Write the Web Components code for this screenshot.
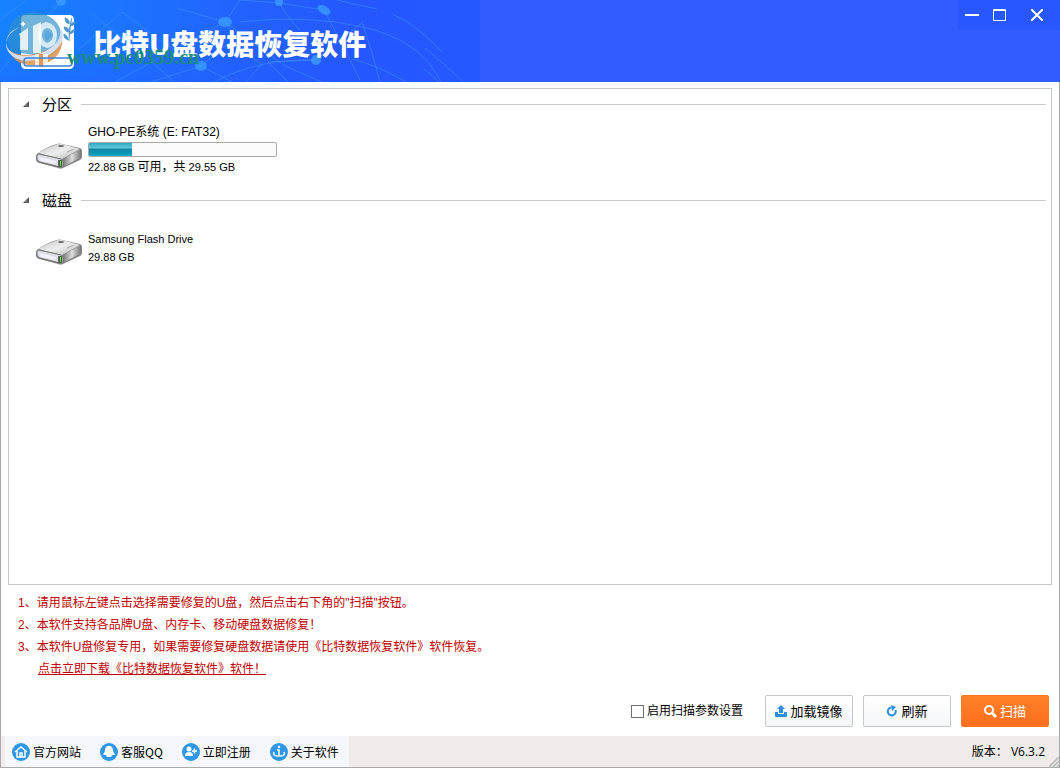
<!DOCTYPE html>
<html lang="zh-CN">
<head>
<meta charset="utf-8">
<meta name="viewport" content="width=device-width, initial-scale=1">
<title>比特U盘数据恢复软件</title>
<style>
html,body{margin:0}
body{font:12px/16px "Liberation Sans","Noto Sans CJK SC",sans-serif;color:#000;background:#fff}
</style>
</head>
<body>
<recovery-app></recovery-app>
<script>
const define = (name, html, setup) => customElements.define(name, class extends HTMLElement {
  constructor() {
    super();
    const t = document.createElement('template');
    t.innerHTML = html;
    this.attachShadow({mode: 'open'}).append(t.content.cloneNode(true));
  }
  connectedCallback() { if (setup) setup(this, this.shadowRoot); }
});

define('brand-logo', `
<style>:host{display:block;width:72px;height:60px}svg{display:block}</style>
<svg width="72" height="60" viewBox="5 11 72 60" aria-hidden="true">
  <path d="M25 15h44q5 0 5 5v44q0 5-5 5H26q-5 0-5-5V20q0-5 4-5z" fill="#fff"/>
  <path d="M8 38Q8 14 34 12q27 3 28 27-2 12-13 18L12 52q-4-6-4-14z" fill="#2f8fc8" opacity=".68"/>
  <path d="M9 50q6 5 19 5 24-2 34-19 2 18-13 26-12 6-25 2Q14 62 9 50z" fill="#dd9448" opacity=".85"/>
  <path d="M20 27Q7 33 6 43q2 12 19 13 15 0 27-9 11-9 8-20 7 8 0 18-11 15-34 16Q9 59 6 46 5 32 20 27z" fill="#d7e6ff" opacity=".9"/>
  <path d="M19 34l9-6v22h-8V36zM33 26l8-4v31h-8z" fill="#fff" opacity=".8"/>
  <path fill-rule="evenodd" d="M46 22q11 2 11 13t-9 13q-10-1-10-13t8-13zm1 6q-5 1-5 7t5 8q6-2 6-8t-6-7z" fill="#fff" opacity=".7"/>
  <path d="M35 54h13v13H35z" fill="#fff" opacity=".75"/><path d="M39 54h4v13h-4z" fill="#e8974d"/>
  <rect x="24" y="58" width="48" height="8" rx="3" fill="none" stroke="#3d83df" stroke-width="1.500"/>
  <path d="M47 30l6 5-6 6-3-6z" fill="#5aa6dc"/>
  <path d="M23 21l1 2 2 1-2 1-1 2-1-2-2-1 2-1z" fill="#fff"/>
  <path d="M69 41q0-15 3-23M69 24q-4-1-4-6 5 1 4 6zm0 8q-4 0-5-5 5 0 5 5zm1-6q3-5 5-4-1 4-5 4zm-1 8q3-5 6-4-2 4-6 4zm-1 6q-5-2-4-6 4 2 4 6z" fill="#5298cf" stroke="#5298cf"/>
</svg>`);

define('net-backdrop', `
<style>:host{display:block;width:480px;height:100%;overflow:hidden}svg{display:block}</style>
<svg width="480" height="82" viewBox="0 0 480 82" aria-hidden="true">
  <defs>
    <linearGradient id="g" x1="0" x2="1"><stop offset="0" stop-color="#1682ff"/><stop offset=".25" stop-color="#1c74ff"/><stop offset=".5" stop-color="#2262fd"/><stop offset=".75" stop-color="#2557ff"/><stop offset="1" stop-color="#2558ff"/></linearGradient>
    <linearGradient id="v" x1="0" x2="0" y1="0" y2="1"><stop offset=".5" stop-color="#2457ff" stop-opacity="0"/><stop offset="1" stop-color="#2457ff" stop-opacity=".35"/></linearGradient>
  </defs>
  <path d="M0 0h480v82H0z" fill="url(#g)"/><path d="M0 0h480v82H0z" fill="url(#v)"/>
  <g fill="none" stroke="#4498ff" stroke-opacity=".5">
    <path d="M0 20L27 0M0 72L61 2M61 0L18 48M115 82L225 22L240 0M92 14l58 46 24 22M122 12L77 51M122 12l39 29 40 25 31 16M201 66l39-32M151 82l50-16M225 22l22 33 15 9-16 18M177 8l48 14 60 44 37 16M214 82q45-24 102-22"/>
    <path d="M240 22q65-8 123 5t78 55M324 10q20 36 36 70M279 3q11 18 21 27M240 0l39 3 45 7M268 62l20 20M268 62l48-2 47-38M337 0l40 9M353 59q28 8 53 23M425 48q22 18 38 34M394 15q22 9 48 37M363 24q10 32 17 58M424 69l14 12"/>
  </g>
  <g fill="#3c9fff" opacity=".75"><circle cx="61" cy="1" r="5"/><ellipse cx="225" cy="22" rx="7" ry="5"/><ellipse cx="201" cy="66" rx="6" ry="5"/><circle cx="279" cy="2" r="4"/><ellipse cx="324" cy="10" rx="7" ry="4" transform="rotate(30 324 10)"/><circle cx="316" cy="60" r="5"/></g>
</svg>`);

define('window-controls', `
<style>
:host{display:flex;height:30px;background:#2856ff}
button{border:0;padding:0;margin:0;background:none;width:28px;height:30px}
button:last-child{width:46px}
svg{display:block;margin:auto}
</style>
<button aria-label="最小化"><svg width="14" height="14"><path d="M0 7h14" stroke="#fff" stroke-width="2"/></svg></button>
<button aria-label="最大化"><svg width="14" height="14"><path d="M.5 1.500h12v11H.5zM0 2.500h13" fill="none" stroke="#fff"/></svg></button>
<button aria-label="关闭"><svg width="12" height="12"><path d="M0 0l12 12M12 0L0 12" stroke="#fff" stroke-width="2"/></svg></button>`);

define('title-bar', `
<style>
:host{display:flex;position:relative;height:82px;background:#325cff;overflow:hidden}
net-backdrop{position:absolute;inset:0 auto auto 0;z-index:0}
.brand{position:relative;display:flex;align-items:center;gap:16px;padding-left:5px;flex:1}
h1{margin:0;padding-top:4px;font:900 28px/40px "Noto Sans CJK SC",sans-serif;color:#fff;white-space:nowrap}
.mark{position:absolute;left:67px;top:46px;font:bold 20px/22px "Liberation Serif",serif;color:#1c8c7c}
window-controls{position:relative;align-self:flex-start}
</style>
<net-backdrop></net-backdrop>
<div class="brand"><brand-logo></brand-logo><h1>比特U盘数据恢复软件</h1><span class="mark">www.pc0359.cn</span></div>
<window-controls></window-controls>`);

define('drive-group', `
<style>
:host{display:block;height:96px}
h2{display:flex;align-items:center;margin:0;font:15px/30px "Noto Sans CJK SC",sans-serif}
h2::after{content:"";flex:1;height:1px;margin-left:9px;background:#c8cbcb}
svg{margin:0 13px 0 14px}
</style>
<h2><svg width="6" height="6"><path d="M6 0v6H0z" fill="#555"/><path d="M4 3v2H2z" fill="#999"/></svg><slot name="title"></slot></h2>
<slot></slot>`);

define('drive-item', `
<style>
:host{display:flex;gap:6px;padding:4px 0 0 27px;align-items:flex-start;font-size:11px}
.info{display:flex;flex-direction:column;line-height:18px}
.pic{display:block;margin-top:20px}
</style>
<svg class="pic" width="46" height="26" viewBox="0 0 46 26" aria-hidden="true">
  <defs><linearGradient id="t" x1="0" x2="1" y2="1"><stop stop-color="#c5c5c5"/><stop offset=".5" stop-color="#ededed"/><stop offset="1" stop-color="#b8b8b8"/></linearGradient>
  <linearGradient id="s" x1="0" x2="1"><stop stop-color="#777"/><stop offset=".5" stop-color="#ddd"/><stop offset="1" stop-color="#777"/></linearGradient></defs>
  <path d="M1 11Q10 4 21 1q2-1 5 0l18 4q2 1 2 3v6q0 2-2 3L27 25q-2 1-5 0L3 20q-3-1-3-3v-4z" fill="#858585"/>
  <path d="M2 10Q12 4 22 1h4l18 5-18 10q-13-3-24-6z" fill="url(#t)"/>
  <path d="M27 16L45 6v8L27 24z" fill="url(#s)"/>
  <path d="M3 11l22 5q2 0 2 3v3q0 2-3 2L4 19q-3-1-3-3v-3q0-2 2-2z" fill="#dedfe8" stroke="#707070"/>
  <path d="M3 14l17 4v3L5 18z" fill="#f3f2fc"/>
  <path d="M22 17h4v7h-4z" fill="#4b674a"/><path d="M24 18h1v5h-1z" fill="#73df50"/>
  <ellipse cx="25" cy="3" rx="3" ry="1" fill="#666"/><path d="M31 9l7-3" stroke="#aaa"/>
</svg>
<div class="info"><slot></slot></div>`);

define('space-meter', `
<style>
:host{display:block}
div{box-sizing:border-box;width:189px;height:15px;border:1px solid #a9a9a9;border-radius:2px;background:#fafafa;overflow:hidden}
i{display:block;width:var(--used);height:100%;background:linear-gradient(#2aa9c5,#63c4d8 35%,#1588a6 50%,#0997b8 80%,#24abc4)}
</style>
<div role="meter" aria-label="已用空间"><i></i></div>`, (el, root) => {
  const m = root.querySelector('div');
  m.setAttribute('aria-valuenow', el.getAttribute('value'));
  el.style.setProperty('--used', el.getAttribute('value') + '%');
});

define('drive-panel', `
<style>
:host{display:block;flex:1;margin:6px 7px 0 7px;border:1px solid #c4c8c8;padding:0 5px 0 0}
.name{font-size:12px}
space-meter{margin:1px 0}
.cjk{font-size:12px}
.flash{margin-top:11px}
</style>
<drive-group><span slot="title">分区</span>
  <drive-item><span class="name">GHO-PE系统 (E: FAT32)</span><space-meter value="23"></space-meter><span>22.88 GB <span class="cjk">可用，共</span> 29.55 GB</span></drive-item>
</drive-group>
<drive-group><span slot="title">磁盘</span>
  <drive-item><span class="flash">Samsung Flash Drive</span><span>29.88 GB</span></drive-item>
</drive-group>`);

define('usage-tips', `
<style>
:host{display:block;padding:7px 17px 0;color:#c00000;line-height:22px}
ol{list-style:none;margin:0;padding:0}
a{color:inherit;margin-left:20px}
</style>
<ol>
<li>1、请用鼠标左键点击选择需要修复的U盘，然后点击右下角的"扫描"按钮。</li>
<li>2、本软件支持各品牌U盘、内存卡、移动硬盘数据修复！</li>
<li>3、本软件U盘修复专用，如果需要修复硬盘数据请使用《比特数据恢复软件》软件恢复。</li>
</ol>
<a href="#download">点击立即下载《比特数据恢复软件》软件！</a>`);

define('app-button', `
<style>
:host{display:block}
button{box-sizing:border-box;width:88px;height:32px;padding:0;display:flex;align-items:center;justify-content:center;gap:3px;border:1px solid #c6c8ca;border-radius:2px;background:linear-gradient(#fff,#f5f6f8);color:#000;font:13px/20px "Noto Sans CJK SC",sans-serif}
:host([primary]) button{border-color:#ff7421;background:linear-gradient(#ff8228,#ff6d1e);color:#fff}
</style>
<button><slot name="icon"></slot><slot></slot></button>`);

define('action-bar', `
<style>
:host{display:flex;justify-content:flex-end;align-items:center;gap:10px;padding:15px 10px 9px}
label{display:flex;align-items:center;gap:3px;margin-right:12px;line-height:20px}
input{appearance:none;box-sizing:border-box;width:13px;height:13px;margin:0;border:1px solid #707070;background:#fff}
svg{display:block}
</style>
<label><input type="checkbox">启用扫描参数设置</label>
<app-button><svg slot="icon" width="12" height="12" viewBox="0 0 12 12"><path d="M6 0l4 4H8v4H4V4H2zM0 7h3v2h6V7h3v4q0 1-1 1H1q-1 0-1-1z" fill="#2d8de0"/></svg>加载镜像</app-button>
<app-button><svg slot="icon" width="12" height="12" viewBox="0 0 12 12"><path d="M5 2.500A4 4 0 1 0 9.500 5" fill="none" stroke="#2d8de0" stroke-width="2"/><path d="M5 0l5 2-4 4z" fill="#2d8de0"/></svg>刷新</app-button>
<app-button primary><svg slot="icon" width="13" height="13" viewBox="0 0 13 13"><circle cx="5" cy="5" r="4" fill="none" stroke="#fff" stroke-width="2"/><path d="M8 8l4 4" stroke="#fff" stroke-width="3"/></svg>扫描</app-button>`);

define('status-link', `
<style>
:host{display:block}
a{display:flex;align-items:center;gap:3px;color:#000;text-decoration:none}
</style>
<a><svg width="18" height="18" viewBox="0 0 18 18" aria-hidden="true"><circle cx="9" cy="9" r="9" fill="#2f96e8"/><g></g></svg><slot></slot></a>`, (el, root) => {
  const icons = {
    home: '<path d="M3 9l6-5 6 5M5 8v6h8V8M8 14v-4h2v4" fill="none" stroke="#fff" stroke-width="1.500"/>',
    chat: '<path d="M9 3c3 0 4 2 4 5l2 4h-3l-1 2H7l-1-2H3l2-4c0-3 1-5 4-5z" fill="#fff"/>',
    user: '<circle cx="7" cy="6" r="2.500" fill="#fff"/><path d="M3 13q0-4 4-4t4 4z" fill="#fff"/><path d="M10 8h5M12.500 5.500v5" fill="none" stroke="#fff" stroke-width="1.500"/>',
    about: '<circle cx="9" cy="4" r="1.300" fill="#fff"/><path d="M7 7h2v5M4 9q-2 4 5 4t5-4" fill="none" stroke="#fff" stroke-width="1.500"/>'
  };
  root.querySelector('g').innerHTML = icons[el.getAttribute('icon')];
  root.querySelector('a').href = '#' + el.getAttribute('icon');
});

define('status-bar', `
<style>
:host{display:flex;position:relative;height:31px;background:#f0ecec;font:12px/18px "Noto Sans CJK SC",sans-serif;justify-content:space-between}
nav{display:flex;align-items:center;gap:19px;margin-left:4px;padding:0 10px 0 7px;background:#f5f7fa}
p{margin:0;padding-right:14px;align-self:center;white-space:pre;font-family:"Open Sans","Noto Sans CJK SC",sans-serif}
.grip{position:absolute;right:0;bottom:0}
</style>
<nav><status-link icon="home">官方网站</status-link><status-link icon="chat">客服QQ</status-link><status-link icon="user">立即注册</status-link><status-link icon="about">关于软件</status-link></nav>
<p>版本： V6.3.2</p>
<svg class="grip" width="10" height="10" aria-hidden="true"><path d="M0 10L10 0M4 10l6-6M8 10l2-2" stroke="#b4b4b4" stroke-width="1.500"/></svg>`);

define('recovery-app', `
<style>
:host{display:flex;flex-direction:column;box-sizing:border-box;min-height:100vh;background:#fff}
main{display:flex;flex-direction:column;flex:1;border:1px solid #aaa;border-top:0}
</style>
<title-bar></title-bar>
<main><drive-panel></drive-panel><usage-tips></usage-tips><action-bar></action-bar><status-bar></status-bar></main>`);
</script>
</body>
</html>
